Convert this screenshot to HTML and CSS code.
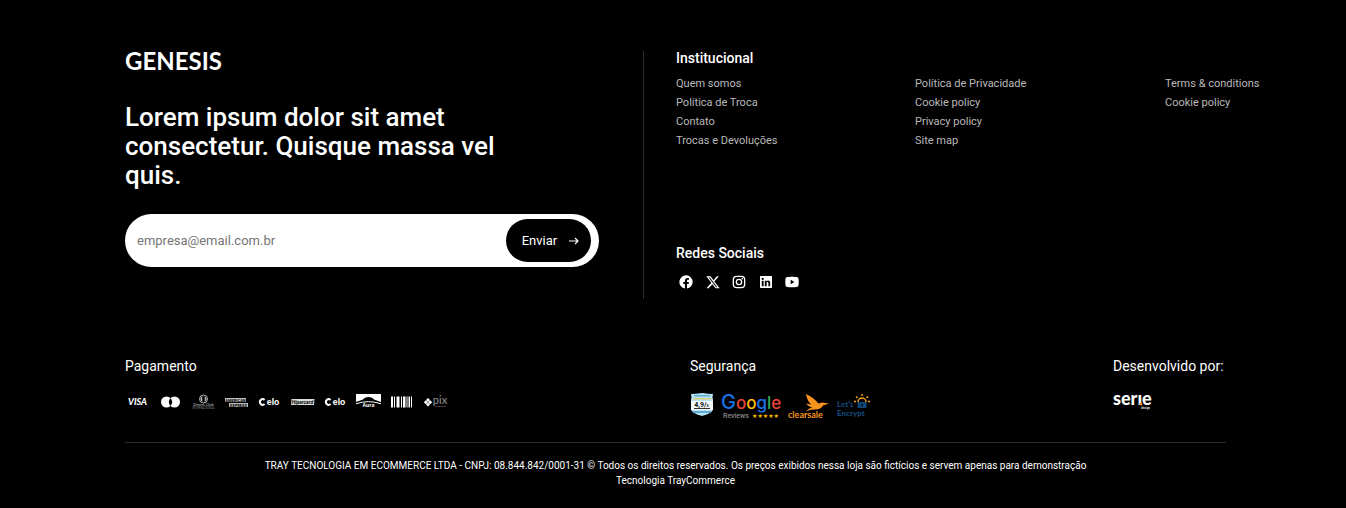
FILE: index.html
```html
<!DOCTYPE html>
<html lang="pt-BR">
<head>
<meta charset="utf-8">
<title>Genesis</title>
<link rel="stylesheet" href="styles.css">
</head>
<body>
<footer class="footer">
  <div class="top">
    <section class="newsletter">
      <a class="logo" href="#">GENESIS</a>
      <h2 class="headline">Lorem ipsum dolor sit amet consectetur. Quisque massa vel quis.</h2>
      <form class="form">
        <input class="email" type="email" aria-label="E-mail" placeholder="empresa@email.com.br">
        <button class="send" type="button">Enviar
          <svg width="10" height="8" viewBox="0 0 10 8" fill="none" stroke="#fff" stroke-width="1.2" aria-hidden="true"><path d="M0 4h9M6 1l3 3-3 3"/></svg>
        </button>
      </form>
    </section>
    <div class="info">
      <nav class="institutional" aria-label="Institucional">
        <h3 class="title">Institucional</h3>
        <div class="columns">
          <ul class="links">
            <li><a href="#">Quem somos</a></li>
            <li><a href="#">Política de Troca</a></li>
            <li><a href="#">Contato</a></li>
            <li><a href="#">Trocas e Devoluções</a></li>
          </ul>
          <ul class="links">
            <li><a href="#">Política de Privacidade</a></li>
            <li><a href="#">Cookie policy</a></li>
            <li><a href="#">Privacy policy</a></li>
            <li><a href="#">Site map</a></li>
          </ul>
          <ul class="links">
            <li><a href="#">Terms &amp; conditions</a></li>
            <li><a href="#">Cookie policy</a></li>
          </ul>
        </div>
      </nav>
      <section>
        <h3 class="title">Redes Sociais</h3>
        <div class="social">
          <a href="#" aria-label="Facebook"><svg viewBox="0 0 24 24"><path d="M22 12a10 10 0 1 0-11.600 9.900v-7H7.900V12h2.500V9.800c0-2.500 1.500-3.900 3.800-3.900 1.100 0 2.200.2 2.200.2v2.500h-1.300c-1.200 0-1.600.8-1.600 1.600V12h2.800l-.5 2.900h-2.300v7A10 10 0 0 0 22 12z"/></svg></a>
          <a href="#" aria-label="X"><svg viewBox="0 0 24 24"><path d="M17.700 3.500h3.100L14 11.200l8 10.300h-6.200L11 15.300l-5.600 6.200H2.300l7.200-8.200L2 3.500h6.400l4.400 5.700zm-1.100 16.200h1.700L7.400 5.200H5.600z"/></svg></a>
          <a href="#" aria-label="Instagram"><svg viewBox="0 0 24 24" class="line"><rect x="3.500" y="3.500" width="17" height="17" rx="5"/><circle cx="12" cy="12" r="4"/><circle class="dot" cx="17" cy="7" r="1.200"/></svg></a>
          <a href="#" aria-label="LinkedIn"><svg viewBox="0 0 24 24"><path fill-rule="evenodd" d="M4 3h16a1 1 0 0 1 1 1v16a1 1 0 0 1-1 1H4a1 1 0 0 1-1-1V4a1 1 0 0 1 1-1zm1.700 7v8.300h2.700V10zM7 5.700a1.600 1.600 0 1 0 .1 3.200A1.600 1.600 0 0 0 7 5.700zM10.200 10v8.300h2.700v-4.500c0-2.300 2.700-2.300 2.700 0v4.500h2.700v-5.200c0-3.700-4-4.200-5.400-1.900V10z"/></svg></a>
          <a href="#" aria-label="YouTube"><svg viewBox="0 0 24 24"><path fill-rule="evenodd" d="M5 4.500q7-.8 14 0 2.500.2 2.800 2.500.6 5 0 10-.3 2.300-2.800 2.500-7 .8-14 0Q2.500 19.300 2.200 17q-.6-5 0-10 .3-2.300 2.800-2.500zM10 8.500v7l5.500-3.500z"/></svg></a>
        </div>
      </section>
    </div>
  </div>

  <div class="partners">
    <section class="payment">
      <h4 class="label">Pagamento</h4>
      <div class="brands">
        <svg viewBox="0 0 25 16" role="img" aria-label="Visa"><text x="12.500" y="11" class="visa">VISA</text></svg>
        <svg viewBox="0 0 25 16" role="img" aria-label="Mastercard"><circle cx="8.500" cy="8" r="5.500"/><circle cx="16.500" cy="8" r="5.500"/><path class="cut" d="M12.500 4q3.400 4 0 8-3.400-4 0-8z"/></svg>
        <svg viewBox="0 0 25 16" role="img" aria-label="Diners Club"><g class="dim"><circle cx="12.500" cy="5" r="4" class="ring"/><path d="M11.300 2v6q-3.800-3 0-6zM13.700 2v6q3.800-3 0-6z"/><text x="12.500" y="11.500" class="tiny">Diners Club</text><text x="12.500" y="15" class="micro">INTERNATIONAL</text></g></svg>
        <svg viewBox="0 0 25 16" role="img" aria-label="American Express"><g class="amex"><path d="M1 4h21v4H1zM5 9h19v4H5z"/><text x="11.500" y="7.500">AMERICAN</text><text x="14.500" y="12.500">EXPRESS</text></g></svg>
        <svg viewBox="0 0 25 16" role="img" aria-label="Elo"><path class="arc" d="M7.600 5.900A2.800 2.800 0 1 0 7.600 10.100"/><text x="16" y="11" class="elo">elo</text></svg>
        <svg viewBox="0 0 25 16" role="img" aria-label="Hipercard"><path class="hiper" d="M1.500 5h23l-.5 6H1z"/><text x="12.500" y="10" class="hipertext">Hipercard</text></svg>
        <svg viewBox="0 0 25 16" role="img" aria-label="Elo"><path class="arc" d="M7.600 5.900A2.800 2.800 0 1 0 7.600 10.100"/><text x="16" y="11" class="elo">elo</text></svg>
        <svg viewBox="0 0 25 16" role="img" aria-label="Aura"><path d="M0 0h25v8l-7-2.500Q16.500 3 12.500 3T7 5.500L0 8z"/><path class="thin" d="M0 9.800Q12.500 5.500 25 9.800"/><text x="12.500" y="13" class="aura">Aura</text></svg>
        <svg viewBox="0 0 25 16" role="img" aria-label="Boleto"><path d="M2 2.500h2v11H2zM5 2.500h1v11H5zM7.500 2.500h3v11h-3zM12 2.500h1v11h-1zM14 2.500h2.500v11H14zM17.500 2.500h1v11h-1zM19.500 2.500h1.500v11h-1.500zM22 2.500h1v11h-1z"/></svg>
        <svg viewBox="0 0 25 16" role="img" aria-label="Pix"><path d="M6 4l2 2-2 2-2-2zM6 8.400l2 2-2 2-2-2zM3.800 6.200l2 2-2 2-2-2zM8.200 6.200l2 2-2 2-2-2z"/><text x="18" y="10" class="pix">pix</text><path class="faint" d="M13 12h11v.8H13z"/></svg>
      </div>
    </section>
    <section class="security">
      <h4 class="label">Segurança</h4>
      <div class="seals">
        <svg width="24" height="26" viewBox="0 0 24 26" role="img" aria-label="Avaliação 4,9/5"><path fill="#b7e3f7" d="M1 1q5 0 11-1 6 1 11 1-1 3 0 6v9q0 4-11 7Q1 20 1 16V7q1-3 0-6z"/><path fill="#5eabd0" d="M4 2h16v1.500H4zM2 18h20l-2 2H4z"/><path fill="#f4fafc" d="M1 8h22v9H1z"/><path fill="#d9cc79" d="M3 5h18v1.500H3z"/><text x="11.500" y="13.500" class="score">4,9/<tspan class="five">5</tspan></text><path class="sealline" d="M4 15.500h16"/></svg>
        <svg width="60" height="26" viewBox="0 0 60 26" role="img" aria-label="Google Reviews"><text x="0" y="16" class="google"><tspan class="capital" fill="#1a73e8">G</tspan><tspan fill="#ea4335">o</tspan><tspan fill="#fbbc05">o</tspan><tspan fill="#1a73e8">g</tspan><tspan fill="#34a853">l</tspan><tspan fill="#ea4335">e</tspan></text><text x="2" y="25" class="reviews">Reviews</text><text x="31" y="25" class="stars">★★★★★</text></svg>
        <svg width="42" height="26" viewBox="0 0 42 26" role="img" aria-label="clearsale"><path fill="#f7941d" d="M18 1Q25 4 30.500 10.500L34 9.500l7 1-6 2q-2 4-8 4-6 0-9 2 2-3 6-4-4-1-6-4l5 1q-4-4-5-10.500z"/><text x="0" y="25" class="clear">clearsale</text></svg>
        <svg width="34" height="26" viewBox="0 0 34 26" role="img" aria-label="Let's Encrypt"><g stroke="#f7a11b" stroke-width="1.500" fill="none"><path d="M21 9a4 4 0 0 1 8 0M25 3V1M20.500 5L19 3.500M29.500 5L31 3.500M19 8.500h-2M31 8.500h2"/></g><path fill="#12477a" d="M20.500 9h9v6h-9z"/><path fill="#001f3a" d="M24 10.500h2v3h-2z"/><text x="0" y="14" class="encrypt">Let's</text><text x="0" y="23" class="encrypt">Encrypt</text></svg>
      </div>
    </section>
    <section class="developer">
      <h4 class="label">Desenvolvido por:</h4>
      <svg width="40" height="18" viewBox="0 0 40 18" role="img" aria-label="Serie design"><text x="0" y="12" class="serie">serıe</text><circle cx="28" cy="11" r="1.500" fill="#f58220"/><text x="28" y="16" class="design">design</text></svg>
    </section>
  </div>

  <div class="legal">
    <p>TRAY TECNOLOGIA EM ECOMMERCE LTDA - CNPJ: 08.844.842/0001-31 © Todos os direitos reservados. Os preços exibidos nessa loja são fictícios e servem apenas para demonstração</p>
    <p>Tecnologia TrayCommerce</p>
  </div>
</footer>
</body>
</html>
```
FILE: styles.css
```css
* { box-sizing: border-box; margin: 0; padding: 0; }
body { background: #000; color: #fff; font-family: Roboto, Arial, sans-serif; }
a { color: inherit; text-decoration: none; }
ul { list-style: none; }
.footer { padding: 51px 120px 17px 125px; }
.top { display: grid; grid-template-columns: 518px 1fr; min-height: 248px; }
.logo { display: block; font: 700 24px/20px Lato, sans-serif; }
.headline { max-width: 400px; margin-top: 32px; font-size: 26px; line-height: 29px; font-weight: 500; }
.form { display: flex; align-items: center; max-width: 474px; height: 53px; margin-top: 24px; padding: 0 8px 0 12px; border-radius: 27px; background: #fff; }
.email { flex: 1; min-width: 0; border: 0; outline: 0; background: none; color: #000; font: 13px Roboto, sans-serif; }
.email::placeholder { color: #757575; }
.send { display: flex; align-items: center; justify-content: center; gap: 12px; width: 85px; height: 43px; padding-left: 4px; border: 0; border-radius: 22px; background: #000; color: #fff; font: 13px Roboto, sans-serif; }
.info { display: flex; flex-direction: column; padding-left: 32px; border-left: 1px solid #2b2b2b; }
.institutional { min-height: 195px; }
.title { font-size: 14px; line-height: 14px; font-weight: 500; }
.columns { display: grid; grid-template-columns: 239px 250px auto; margin-top: 9px; }
.links { color: #b9b9b9; font-size: 11px; line-height: 19px; white-space: nowrap; }
.social { display: flex; justify-content: space-between; width: 124px; margin-top: 14px; padding-left: 2px; }
.social a { height: 16px; }
.social svg { display: block; width: 16px; height: 16px; fill: #fff; }
.social .line { fill: none; stroke: #fff; stroke-width: 2; }
.social .dot { fill: #fff; stroke: none; }
.partners { display: grid; grid-template-columns: 565px 1fr 113px; margin-top: 59px; padding-bottom: 23px; border-bottom: 1px solid #2b2b2b; }
.partners svg { overflow: visible; }
.label { font-size: 14px; line-height: 16px; font-weight: 400; white-space: nowrap; }
.brands { display: flex; gap: 8px; margin-top: 20px; }
.brands svg { width: 25px; height: 16px; fill: #fff; }
.brands text { text-anchor: middle; }
.visa { font: italic 900 9px Lato, sans-serif; }
.brands .cut { fill: #000; }
.dim { opacity: .7; }
.ring, .thin { fill: none; stroke: #fff; stroke-width: 1; }
.tiny { font: 4px Roboto, sans-serif; }
.micro { font: 3px Roboto, sans-serif; opacity: .6; }
.amex { opacity: .75; }
.amex text { fill: #000; font: 700 4px Roboto, sans-serif; }
.arc { fill: none; stroke: #fff; stroke-width: 2; }
.elo { font: 900 9px Lato, sans-serif; }
.hiper { opacity: .85; }
.brands .hipertext { fill: #000; font: italic 700 5px Roboto, sans-serif; }
.aura { font: 700 5px "Open Sans", sans-serif; }
.pix { font: 400 11px Lato, sans-serif; opacity: .55; }
.faint { opacity: .3; }
.seals { display: flex; gap: 7px; margin-top: 19px; }
.score { fill: #111; font: 700 7px Roboto, sans-serif; text-anchor: middle; }
.five { font-size: 4px; }
.sealline { stroke: #333; stroke-width: 1; }
.google { font: 500 17px Inter, Lato, sans-serif; }
.capital { font-size: 20px; }
.reviews { fill: #888; font: 500 7px Roboto, sans-serif; }
.stars { fill: #fbbc05; font: 6px "DejaVu Sans", sans-serif; }
.clear { fill: #f7941d; font: 700 9px Lato, sans-serif; }
.encrypt { fill: #12477a; font: 900 8px Lato, sans-serif; }
.developer svg { display: block; margin-top: 19px; }
.serie { fill: #fff; font: 900 18px Lato, sans-serif; }
.design { fill: #ddd; font: 700 3px Roboto, sans-serif; }
.legal { padding-top: 15px; text-align: center; font-size: 10px; line-height: 15px; }
```
